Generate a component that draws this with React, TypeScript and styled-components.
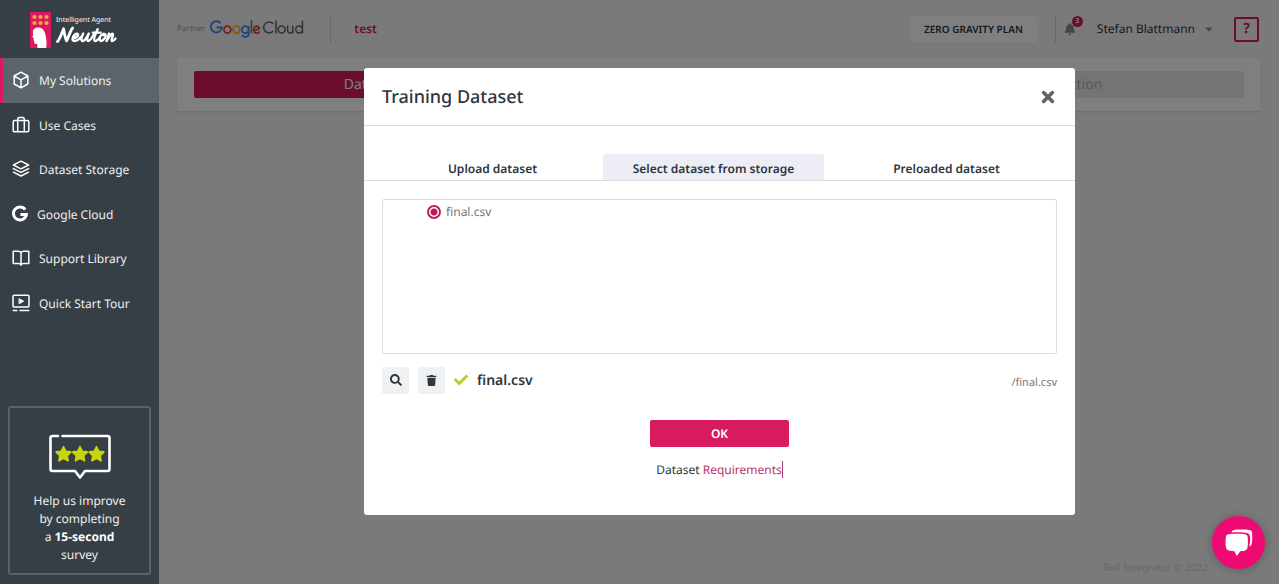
import React from 'react';
import styled, { createGlobalStyle, css } from 'styled-components';
import { FaBell, FaCaretDown, FaCheck, FaSearch, FaTrash } from 'react-icons/fa';

const Global = createGlobalStyle`
  *, *::before, *::after { box-sizing: border-box; }
  body {
    margin: 0;
    font-family: "Noto Sans", "Open Sans", sans-serif;
    font-size: 12px;
    line-height: 18px;
    text-rendering: geometricPrecision;
    color: #2f363d;
    background: #f5f5f5;
  }
  button, input { font: inherit; color: inherit; text-rendering: inherit; }
  button { border: 0; padding: 0; cursor: pointer; }
  a { text-decoration: none; color: inherit; }
  svg { display: block; flex: none; }
`;

const Shell = styled.div`
  display: flex;
  min-height: 100vh;
`;

const Sidebar = styled.aside`
  position: relative;
  z-index: 3;
  display: flex;
  flex-direction: column;
  flex: 0 0 159px;
  background: #363e46;
  color: #eef0f1;
`;

const Brand = styled.a`
  display: flex;
  gap: 5px;
  height: 58px;
  padding: 12px 0 0 30px;
  color: #fff;
`;

const BrandText = styled.span`
  display: flex;
  flex-direction: column;
  padding-top: 3px;
`;

const BrandTag = styled.span`
  font-size: 7px;
  line-height: 11px;
  white-space: nowrap;
`;

const Nav = styled.nav`
  display: grid;
  grid-template-rows: repeat(6, 1fr);
  height: 267px;
`;

const NavItem = styled.a<{ $active?: boolean }>`
  display: flex;
  align-items: center;
  gap: 9px;
  padding-left: 12px;
  ${(p) =>
    p.$active &&
    css`
      background: #5c646b;
      box-shadow: inset 3px 0 0 #d81b60;
    `}
`;

const NavLabel = styled.span`
  padding-top: 2px;
`;

const Survey = styled.a`
  display: flex;
  flex-direction: column;
  align-items: center;
  gap: 12px;
  margin: auto 8px 9px;
  padding: 26px 16px 9px;
  border: 2px solid #59626a;
  border-radius: 3px;
  text-align: center;
  strong { color: #fff; }
`;

const Main = styled.div`
  display: flex;
  flex-direction: column;
  flex: 1;
  min-width: 0;
`;

const TopBar = styled.header`
  display: flex;
  align-items: center;
  height: 58px;
  padding: 0 20px 0 18px;
`;

const Partner = styled.div`
  display: flex;
  align-items: center;
  gap: 5px;
  font-size: 8px;
  color: #999;
`;

const Rule = styled.span`
  width: 1px;
  height: 27px;
  background: #d0d0d0;
`;

const ProjectName = styled.h2`
  flex: 1;
  margin: 0 0 0 23px;
  font-size: 12px;
  font-weight: 600;
  color: #d81b60;
`;

const LeftRule = styled(Rule)`
  margin-left: 26px;
`;

const PlanButton = styled.button`
  height: 27px;
  margin-right: 18px;
  padding: 0 14px;
  border-radius: 3px;
  background: #fff;
  font-size: 10px;
  font-weight: 600;
  box-shadow: 0 1px 2px rgba(0, 0, 0, 0.04);
`;

const Alerts = styled.button`
  position: relative;
  margin: 0 21px 0 8px;
  background: none;
  color: #8b8b8b;
`;

const Badge = styled.span`
  position: absolute;
  top: -7px;
  right: -7px;
  width: 11px;
  border-radius: 50%;
  background: #d81b60;
  color: #eee;
  font-size: 7px;
  font-weight: 700;
  line-height: 11px;
`;

const User = styled.button`
  display: flex;
  align-items: center;
  gap: 8px;
  margin-right: 19px;
  background: none;
  svg { color: #8b8b8b; }
`;

const Help = styled.button`
  width: 25px;
  height: 25px;
  border: 2px solid #d81b60;
  border-radius: 2px;
  background: none;
  color: #d81b60;
  font-size: 14px;
  font-weight: 700;
  line-height: 20px;
`;

const Steps = styled.div`
  display: flex;
  margin: 0 18px;
  padding: 13px 17px;
  border-radius: 2px;
  background: #fff;
  box-shadow: 0 1px 3px rgba(0, 0, 0, 0.12);
`;

const Step = styled.button<{ $active?: boolean }>`
  flex: 1;
  height: 27px;
  border-radius: 2px;
  background: ${(p) => (p.$active ? '#d81b60' : '#e9e9e9')};
  color: ${(p) => (p.$active ? '#fff' : '#b4b4b4')};
  font-size: 14px;
`;

const Footer = styled.footer`
  margin-top: auto;
  padding: 0 71px 8px;
  text-align: right;
  font-size: 10px;
  color: #cfcfcf;
`;

const Overlay = styled.div`
  position: fixed;
  inset: 0;
  z-index: 2;
  display: flex;
  align-items: center;
  justify-content: center;
  padding: 0 0 2px 160px;
  background: rgba(0, 0, 0, 0.5);
`;

const Dialog = styled.section`
  width: min(711px, calc(100% - 32px));
  border-radius: 3px;
  background: #fff;
`;

const DialogHead = styled.header`
  display: flex;
  align-items: center;
  justify-content: space-between;
  height: 58px;
  padding: 2px 20px 0 18px;
  border-bottom: 1px solid #dcdcdc;
`;

const Title = styled.h1`
  margin: 0;
  font-size: 18px;
  line-height: 24px;
  font-weight: 500;
`;

const Close = styled.button`
  background: none;
  color: #5f6265;
`;

const Tabs = styled.div`
  display: flex;
  padding: 28px 18px 0;
  border-bottom: 1px solid #dcdcdc;
`;

const Tab = styled.button<{ $active?: boolean }>`
  flex: 0 1 221px;
  height: 26px;
  padding-top: 4px;
  border-radius: 3px 3px 0 0;
  background: ${(p) => (p.$active ? '#ededf6' : 'transparent')};
  font-weight: 600;
  &:last-child { margin-left: auto; }
`;

const Body = styled.div`
  padding: 18px 18px 36px;
`;

const FileList = styled.div`
  height: 155px;
  padding: 3px 44px;
  border: 1px solid #dcdcdc;
  border-radius: 2px;
`;

const FileOption = styled.label`
  display: inline-flex;
  align-items: center;
  gap: 5px;
  color: #74777a;
`;

const Radio = styled.input`
  appearance: none;
  width: 14px;
  height: 14px;
  margin: 0;
  border: 2px solid #b9215a;
  border-radius: 50%;
  background: radial-gradient(circle, #c2185b 0 3px, #fff 4px);
`;

const Selected = styled.div`
  display: flex;
  align-items: center;
  gap: 9px;
  margin-top: 13px;
`;

const IconButton = styled.button`
  display: grid;
  place-items: center;
  width: 27px;
  height: 27px;
  border-radius: 2px;
  background: #f0f1f3;
`;

const FileName = styled.span`
  flex: 1;
  padding-top: 2px;
  font-size: 14px;
  font-weight: 600;
`;

const FilePath = styled.span`
  padding-top: 5px;
  font-size: 11px;
  color: #777;
`;

const Actions = styled.div`
  display: flex;
  flex-direction: column;
  align-items: center;
  gap: 14px;
  margin-top: 26px;
`;

const OkButton = styled.button`
  width: 139px;
  height: 27px;
  padding-top: 2px;
  border-radius: 2px;
  background: #d81b60;
  color: #fff;
  font-weight: 600;
`;

const Requirements = styled.p`
  margin: 0;
  a {
    border-right: 1px solid #a83668;
    color: #b8326d;
  }
`;

const Chat = styled.button`
  position: fixed;
  right: 14px;
  bottom: 15px;
  z-index: 4;
  display: grid;
  place-items: center;
  width: 53px;
  height: 53px;
  border-radius: 50%;
  background: #ee0a72;
  box-shadow: 0 1px 8px rgba(0, 0, 0, 0.25);
`;

const LineSvg = ({ children }: { children: React.ReactNode }) => (
  <svg width="18" height="18" viewBox="0 0 18 18" fill="none" stroke="#fff" strokeWidth="1.5" strokeLinejoin="round" strokeLinecap="round">
    {children}
  </svg>
);

const CubeIcon = () => (
  <LineSvg>
    <path d="M9 1.2 15.8 5v8L9 16.8 2.2 13V5ZM2.4 5.2 9 8.8l6.6-3.6M9 8.8v7.8" />
  </LineSvg>
);

const CaseIcon = () => (
  <LineSvg>
    <path d="M2.6 4.6h12.8q1.4 0 1.4 1.4v8.4q0 1.4-1.4 1.4H2.6q-1.4 0-1.4-1.4V6q0-1.4 1.4-1.4ZM5.7 15.6V3.2q0-1.6 1.6-1.6h3.4q1.6 0 1.6 1.6v12.4" />
  </LineSvg>
);

const LayersIcon = () => (
  <LineSvg>
    <path d="M9 1.2 16.6 5 9 8.8 1.4 5ZM1.4 8.6 9 12.4l7.6-3.8M1.4 12.2 9 16l7.6-3.8" />
  </LineSvg>
);

const GIcon = () => (
  <svg width="16" height="18" viewBox="0 0 16 18" fill="none" stroke="#fff" strokeWidth="3">
    <path d="M13.2 4.6A6.5 6.5 0 1 0 14.4 9.6H8.4" />
  </svg>
);

const BookIcon = () => (
  <LineSvg>
    <path d="M9 3.6Q8.2 2.2 6.4 2.2H1.2v12.2h5.4q1.7 0 2.4 1.4.7-1.4 2.4-1.4h5.4V2.2h-5.2Q9.8 2.2 9 3.6ZM9 3.6v12.6" />
  </LineSvg>
);

const TourIcon = () => (
  <LineSvg>
    <path d="M2.2 1.2h13.6q1.2 0 1.2 1.2v9.4q0 1.2-1.2 1.2H2.2Q1 13 1 11.8V2.4Q1 1.2 2.2 1.2ZM1.2 16.6h3.6M8 16.6h8.8" />
    <path d="m7.4 4.9 4.2 2.3-4.2 2.3Z" fill="#fff" strokeWidth="1" />
  </LineSvg>
);

const NeutonMark = () => (
  <svg width="21" height="36" viewBox="0 0 21 36">
    <rect width="21" height="36" fill="#d81b60" />
    <g fill="#f6a24b">
      {[4.5, 10.5, 16.5].map((x) => (
        <React.Fragment key={x}>
          <circle cx={x} cy="5" r="2.1" />
          <circle cx={x} cy="11" r="2.1" />
        </React.Fragment>
      ))}
    </g>
    <path fill="#fff" d="M2.8 20C3 16.6 6.4 15 9.4 15.6 13 16.4 14.8 19.5 15.6 23.2L16.6 30 16.2 36H7.4L7.2 32 4.6 31.8 4.2 29 3.5 28 3.8 26.2 2.4 25.2 3.1 22.7Z" />
  </svg>
);

const Wordmark = () => (
  <svg width="62" height="20" viewBox="0 0 62 20" fill="none" stroke="#fff" strokeWidth="2.4" strokeLinecap="round" strokeLinejoin="round" role="img" aria-label="Neuton">
    <path strokeWidth="2.8" d="M1.5 15.6C4 13 5.8 7 7.6 2.8 8.3 7 9 12 10.6 14.8 12.8 11 14 5 16.6 2" />
    <path d="M17 12.2C20 12 22.6 10 22 8.2 20.6 6.6 16.6 9.5 16.5 13 16.6 16.5 21.5 15.2 25 11" />
    <path d="M27.2 7.6C26 10 24.4 13.6 26 14.9 28 15.8 31 11.5 32.8 7.6 31.6 10.5 30.5 14 32 14.9 34 15.4 36.5 11 38.5 7" />
    <path d="M41.6 3.2C40 7 36.8 13.5 38.6 14.9 40 15.6 42 13.6 43.8 11.5M36.8 6.6H44.6" />
    <path d="M47.5 7.8C44.5 8.5 42.6 12.8 44.2 14.6 46.5 16.2 50.4 11 49.4 8.6 48.7 7.6 47.5 7.8 47.2 9" />
    <path d="M53 7.6C52.3 10 51.3 12.5 50.6 15 52.6 11.5 54.6 8 56.4 7.8 58.4 8.2 54.6 13.5 55.8 14.9 57 15.6 58.4 14 59.4 12.6" />
  </svg>
);

const GoogleCloudLogo = () => (
  <svg width="94" height="20" viewBox="0 0 94 20" fill="none" strokeWidth="1.8" role="img" aria-label="Google Cloud">
    <path stroke="#4285f4" d="M10.7 4.2A5.6 5.6 0 1 0 12 8.5H6.6" />
    <circle cx="17.4" cy="10.6" r="3.5" stroke="#ea4335" />
    <circle cx="26.5" cy="10.6" r="3.5" stroke="#fbbc05" />
    <path stroke="#4285f4" d="M38.6 6.9v8c0 3.8-5.5 3.7-6.400 1M38.600 10.600a3.300 3.500 0 1 1-6.600 0 3.300 3.500 0 1 1 6.600 0" />
    <path stroke="#34a853" d="M41.500 1.400v13" />
    <path stroke="#ea4335" d="M44.300 11.900 49.400 9.600C48.400 6.200 43.800 6.500 43.800 10.600c0 4 4.300 4.600 5.900 1.900" />
    <g stroke="#5f6368" strokeWidth="1.500">
      <path d="M63.200 4.700a5.500 5.500 0 1 0 0 7.400M66 1.400v13" />
      <circle cx="71.600" cy="10.600" r="3.500" />
      <path d="M77.600 6.500v5.100c0 3.400 5.200 3.400 5.200-.2M82.800 6.500v7.900M92.400 1.400v13M92.400 10.600a3.300 3.500 0 1 1-6.600 0 3.300 3.500 0 1 1 6.600 0" />
    </g>
  </svg>
);

const SurveyIcon = () => (
  <svg width="64" height="46" viewBox="0 0 64 46" fill="none">
    <path stroke="#fff" strokeWidth="2.6" strokeLinecap="round" strokeLinejoin="round" d="M10 2H4.5Q2.5 2 2.5 4v31q0 2 2 2H27l5 6.5 5-6.5h22.5q2 0 2-2V4q0-2-2-2H14.5" />
    {[15.5, 32, 48.5].map((x) => (
      <path
        key={x}
        transform={`translate(${x} 20)`}
        fill="#c6d60e"
        stroke="#c6d60e"
        strokeWidth="1.8"
        strokeLinejoin="round"
        d="m0-7.2 2.3 4.5 4.9.7-3.6 3.6.9 5L0 4.2l-4.5 2.400.9-5-3.600-3.600 4.900-.7Z"
      />
    ))}
  </svg>
);

const CloseIcon = () => (
  <svg width="14" height="14" viewBox="0 0 14 14" stroke="currentColor" strokeWidth="3.6" strokeLinecap="round">
    <path d="m2.6 2.6 8.8 8.8M11.4 2.6l-8.8 8.8" />
  </svg>
);

const ChatIcon = () => (
  <svg width="30" height="28" viewBox="0 0 30 28">
    <path fill="#fff" d="M7.5 3.2C8.5.8 10.5.6 17 .6c7.5 0 10.5.2 11 2.8.5 2.7.3 9.2-.3 11.4-.5 1.8-1.3 2.5-2.7 2.8 1.4-4 1.5-9.2.6-11.7C24.8 3.8 21 3.4 16 3.2Z" />
    <path fill="#fff" d="M12.8 4.7c8.2 0 10 .3 10.7 2.6.6 2.5.6 8.5 0 11.2-.6 2.8-2.5 3.5-7.2 3.7L12.8 27l-2.4-4.8c-5.8-.3-7.7-.8-8.4-3.7-.6-2.7-.6-8.5 0-11.2.7-2.3 2.6-2.6 10.8-2.6Z" />
  </svg>
);

const navItems = [
  { label: 'My Solutions', Icon: CubeIcon, active: true },
  { label: 'Use Cases', Icon: CaseIcon },
  { label: 'Dataset Storage', Icon: LayersIcon },
  { label: 'Google Cloud', Icon: GIcon },
  { label: 'Support Library', Icon: BookIcon },
  { label: 'Quick Start Tour', Icon: TourIcon },
];

export default function App() {
  return (
    <>
      <Global />
      <Shell>
        <Sidebar>
          <Brand href="#home">
            <NeutonMark />
            <BrandText>
              <BrandTag>Intelligent Agent</BrandTag>
              <Wordmark />
            </BrandText>
          </Brand>
          <Nav>
            {navItems.map(({ label, Icon, active }) => (
              <NavItem key={label} href="#nav" $active={active}>
                <Icon />
                <NavLabel>{label}</NavLabel>
              </NavItem>
            ))}
          </Nav>
          <Survey href="#survey">
            <SurveyIcon />
            <span>
              Help us improve
              <br />
              by completing
              <br />a <strong>15-second</strong>
              <br />
              survey
            </span>
          </Survey>
        </Sidebar>
        <Main>
          <TopBar>
            <Partner>
              Partner
              <GoogleCloudLogo />
            </Partner>
            <LeftRule />
            <ProjectName>test</ProjectName>
            <PlanButton>ZERO GRAVITY PLAN</PlanButton>
            <Rule />
            <Alerts aria-label="Notifications">
              <FaBell size={12} />
              <Badge>3</Badge>
            </Alerts>
            <User>
              Stefan Blattmann
              <FaCaretDown size={12} />
            </User>
            <Help aria-label="Help">?</Help>
          </TopBar>
          <Steps>
            <Step $active>Dataset</Step>
            <Step>Training</Step>
            <Step>Prediction</Step>
          </Steps>
          <Footer>Bell Integrator © 2022</Footer>
        </Main>
      </Shell>
      <Overlay>
        <Dialog role="dialog" aria-labelledby="dialog-title">
          <DialogHead>
            <Title id="dialog-title">Training Dataset</Title>
            <Close aria-label="Close">
              <CloseIcon />
            </Close>
          </DialogHead>
          <Tabs role="tablist">
            <Tab role="tab">Upload dataset</Tab>
            <Tab role="tab" aria-selected $active>
              Select dataset from storage
            </Tab>
            <Tab role="tab">Preloaded dataset</Tab>
          </Tabs>
          <Body>
            <FileList>
              <FileOption>
                <Radio type="radio" name="dataset" defaultChecked />
                final.csv
              </FileOption>
            </FileList>
            <Selected>
              <IconButton aria-label="Preview">
                <FaSearch size={12} />
              </IconButton>
              <IconButton aria-label="Delete">
                <FaTrash size={11} />
              </IconButton>
              <FaCheck size={14} color="#bccb1c" />
              <FileName>final.csv</FileName>
              <FilePath>/final.csv</FilePath>
            </Selected>
            <Actions>
              <OkButton>OK</OkButton>
              <Requirements>
                Dataset <a href="#requirements">Requirements</a>
              </Requirements>
            </Actions>
          </Body>
        </Dialog>
      </Overlay>
      <Chat aria-label="Open chat">
        <ChatIcon />
      </Chat>
    </>
  );
}
